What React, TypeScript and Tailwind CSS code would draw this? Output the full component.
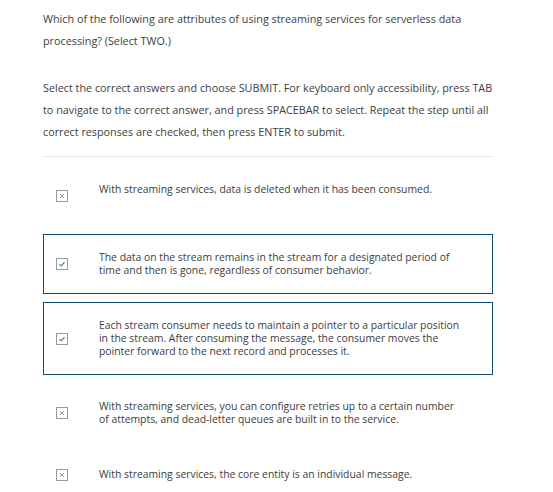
import React from "react";

type Opt = { text: string; checked: boolean; tall?: boolean };

const options: Opt[] = [
  { text: "With streaming services, data is deleted when it has been consumed.", checked: false, tall: true },
  { text: "The data on the stream remains in the stream for a designated period of time and then is gone, regardless of consumer behavior.", checked: true },
  { text: "Each stream consumer needs to maintain a pointer to a particular position in the stream. After consuming the message, the consumer moves the pointer forward to the next record and processes it.", checked: true },
  { text: "With streaming services, you can configure retries up to a certain number of attempts, and dead-letter queues are built in to the service.", checked: false },
  { text: "With streaming services, the core entity is an individual message.", checked: false },
];

function Box({ checked }: { checked: boolean }) {
  return (
    <div className="w-[12px] h-[12px] border border-[#9a9a9a] bg-white flex items-center justify-center shrink-0">
      {checked ? (
        <svg width="8" height="8" viewBox="0 0 8 8">
          <path d="M1.5 4.3 L3.2 5.8 L6.5 2.4" fill="none" stroke="#1a6fa0" strokeWidth="1.1" />
        </svg>
      ) : (
        <svg width="6" height="6" viewBox="0 0 6 6">
          <path d="M1 1 L5 5 M5 1 L1 5" fill="none" stroke="#777" strokeWidth="0.8" />
        </svg>
      )}
    </div>
  );
}

export default function App() {
  return (
    <div
      className="w-[553px] h-[492px] bg-white text-[#3d3d3d] overflow-hidden"
      style={{ fontFamily: "'Open Sans', 'Noto Sans', sans-serif" }}
    >
      <div className="pl-[43px] w-[493px] pt-[8px]">
        <p className="leading-[22px] text-[10.8px]">
          Which of the following are attributes of using streaming services for serverless data processing? (Select TWO.)
        </p>
        <p className="leading-[22px] mt-[25px] text-[10.8px]">
          Select the correct answers and choose SUBMIT. For keyboard only accessibility, press TAB to navigate to the correct answer, and press SPACEBAR to select. Repeat the step until all correct responses are checked, then press ENTER to submit.
        </p>
        <div className="mt-[13px] h-px bg-[#e6e6e6]" />
        <div className="mt-[9px] flex flex-col gap-[8px] text-[10.4px]">
          {options.map((o, i) => (
            <div
              key={i}
              className={
                "flex items-center border py-[16px] pl-[12px] pr-[30px] " +
                (o.checked ? "border-[#0e4d6d]" : "border-transparent")
              }
            >
              <Box checked={o.checked} />
              <div className={"ml-[31px] leading-[13px] " + (o.tall ? "min-h-[26px]" : "")}>{o.text}</div>
            </div>
          ))}
        </div>
      </div>
    </div>
  );
}
